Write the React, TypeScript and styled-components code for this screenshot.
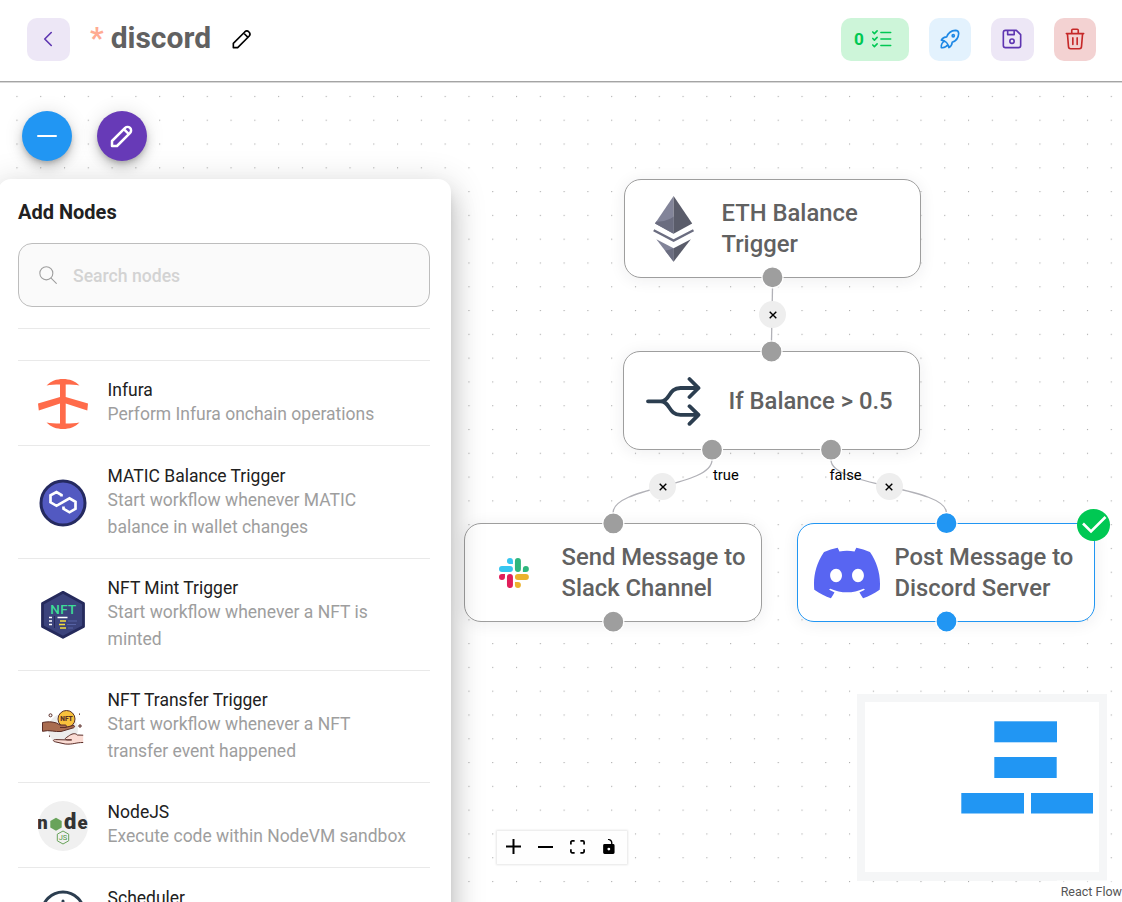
import React from "react";
import styled, { createGlobalStyle } from "styled-components";
import { SiDiscord } from "react-icons/si";

const GlobalStyle = createGlobalStyle`
  * { box-sizing: border-box; }
  body { margin: 0; background: #fff; font-family: Roboto, sans-serif; }
`;

const Page = styled.div`
  display: flex;
  flex-direction: column;
  width: 100%;
  height: 902px;
  overflow: hidden;
`;

const Header = styled.header`
  position: relative;
  z-index: 2;
  display: flex;
  align-items: center;
  height: 82px;
  padding: 0 26px 3px 27px;
  background: #fff;
  border-bottom: 1px solid #a4a4a4;
  box-shadow: 0 1px 0 #d8d8d8;
  flex: none;
`;

const Title = styled.h1`
  display: flex;
  gap: 7px;
  width: 121px;
  margin: 0 18px 3px 20px;
  font-size: 30px;
  line-height: 40px;
  font-weight: 700;
  color: #616161;
`;

const Dirty = styled.span`
  color: #ffab91;
`;

const Actions = styled.div`
  display: flex;
  gap: 20px;
  margin-left: auto;
`;

const ToolButton = styled.button<{ $bg: string; $fg: string; $width?: number }>`
  display: flex;
  align-items: center;
  justify-content: center;
  gap: 5px;
  width: ${(p) => p.$width ?? 42}px;
  height: 43px;
  padding: 0 1px 0 0;
  border: 0;
  border-radius: 10px;
  background: ${(p) => p.$bg};
  color: ${(p) => p.$fg};
  font: 700 17.2px Roboto, sans-serif;
`;

const Canvas = styled.main`
  position: relative;
  flex: 1;
  overflow: hidden;
`;

const Layer = styled.svg`
  position: absolute;
  inset: 0;
  width: 100%;
  height: 100%;
`;

const NodeCard = styled.div<{ $x: number; $y: number; $width: number; $active?: boolean }>`
  position: absolute;
  left: ${(p) => p.$x}px;
  top: ${(p) => p.$y}px;
  display: flex;
  align-items: center;
  gap: 14px;
  width: ${(p) => p.$width}px;
  height: 99px;
  padding-left: 15.5px;
  border: 1px solid ${(p) => (p.$active ? "#2196f3" : "#9e9e9e")};
  border-radius: 17px;
  background: #fff;
  box-shadow: 0 2px 16px rgba(32, 40, 45, 0.08);
`;

const NodeIcon = styled.div`
  display: flex;
  align-items: center;
  justify-content: center;
  width: 67px;
  height: 70px;
  flex: none;
`;

const NodeLabel = styled.div<{ $indent?: number }>`
  padding-top: ${(p) => (p.$indent ? 1 : 0)}px;
  padding-left: ${(p) => p.$indent ?? 0}px;
  font-size: 23.8px;
  line-height: 31px;
  font-weight: 500;
  color: #616161;
  white-space: pre;
`;

const Handle = styled.circle<{ $active?: boolean }>`
  fill: ${(p) => (p.$active ? "#2196f3" : "#9e9e9e")};
  stroke: #fff;
  stroke-width: 1.2px;
`;

const EdgeButton = styled.button<{ $x: number; $y: number }>`
  position: absolute;
  left: ${(p) => p.$x - 13.5}px;
  top: ${(p) => p.$y - 13.5}px;
  display: flex;
  align-items: center;
  justify-content: center;
  width: 27px;
  height: 27px;
  padding: 0;
  border: 0;
  border-radius: 50%;
  background: #eee;
  color: #000;
`;

const EdgeLabel = styled.span<{ $x: number; $y: number }>`
  position: absolute;
  left: ${(p) => p.$x}px;
  top: ${(p) => p.$y}px;
  font-size: 14.7px;
  line-height: 18px;
  color: #000;
`;

const DoneBadge = styled.span`
  position: absolute;
  left: 1077px;
  top: 427px;
  display: flex;
  width: 33px;
  height: 32px;
  border-radius: 50%;
  background: #00c853;
`;

const Fabs = styled.div`
  position: absolute;
  left: 22px;
  top: 29px;
  display: flex;
  gap: 25px;
`;

const Fab = styled.button<{ $bg: string }>`
  display: flex;
  align-items: center;
  justify-content: center;
  width: 50px;
  height: 50px;
  padding: 0;
  border: 0;
  border-radius: 50%;
  background: ${(p) => p.$bg};
  color: #fff;
  box-shadow: 0 3px 5px -1px rgba(0, 0, 0, 0.2), 0 7px 11px rgba(0, 0, 0, 0.14),
    0 1px 20px rgba(0, 0, 0, 0.12);
`;

const Panel = styled.aside`
  position: absolute;
  left: -2px;
  top: 97px;
  width: 453px;
  height: 900px;
  padding: 19px 21px 0 20px;
  border-radius: 13px;
  background: #fff;
  box-shadow: 0 9px 11px -5px rgba(0, 0, 0, 0.2), 0 18px 26px 2px rgba(0, 0, 0, 0.14),
    0 7px 33px 6px rgba(0, 0, 0, 0.12);
`;

const PanelTitle = styled.h2`
  margin: 0;
  font-size: 20px;
  line-height: 28px;
  font-weight: 700;
  color: #212121;
`;

const SearchBox = styled.label`
  display: flex;
  align-items: center;
  gap: 15px;
  height: 64px;
  margin: 17px 0 21px;
  padding-left: 19px;
  border: 1px solid #bdbdbd;
  border-radius: 14px;
  background: #fafafa;
  color: #9e9e9e;
`;

const SearchInput = styled.input`
  flex: 1;
  min-width: 0;
  padding: 2px 0 0;
  border: 0;
  outline: 0;
  background: transparent;
  font: 500 17.6px Roboto, sans-serif;
  &::placeholder {
    color: #d3d3d3;
    opacity: 1;
  }
`;

const List = styled.ul`
  margin: 0;
  padding: 31px 0 0;
  border-top: 1px solid #e9e9e9;
  list-style: none;
`;

const Item = styled.li`
  display: flex;
  align-items: center;
  gap: 19.6px;
  padding: 18.4px 0 17.2px 20px;
  border-top: 1px solid #e9e9e9;
`;

const ItemIcon = styled.div`
  display: flex;
  width: 50px;
  height: 50px;
  flex: none;
  margin: -2px 0;
`;

const ItemName = styled.div`
  font-size: 17.5px;
  line-height: 22px;
  color: #212121;
`;

const ItemText = styled.div`
  min-height: 26.8px;
  font-size: 17.5px;
  line-height: 26.8px;
  color: #9e9e9e;
  white-space: pre;
`;

const Controls = styled.div`
  position: absolute;
  left: 497px;
  top: 749px;
  display: flex;
  width: 130px;
  height: 33px;
  padding: 0 2px 2px 0;
  background: #fefefe;
  box-shadow: 0 0 2px 1px rgba(0, 0, 0, 0.1);
`;

const ControlButton = styled.button`
  display: flex;
  align-items: center;
  justify-content: center;
  flex: 1;
  padding: 0;
  border: 0;
  background: transparent;
`;

const MiniMap = styled.div`
  position: absolute;
  right: 15px;
  top: 612px;
  width: 250px;
  height: 187px;
  border: 8px solid #f5f6f7;
  border-bottom-width: 9px;
  background: #fff;
  svg { display: block; }
`;

const Attribution = styled.div`
  position: absolute;
  right: 0;
  bottom: 0;
  padding: 3px 0 1px 4px;
  background: rgba(255, 255, 255, 0.5);
  font-size: 12.5px;
  line-height: 18px;
  color: #555;
`;

type StrokeProps = { size: number; width?: number; children: React.ReactNode };

const Stroke = ({ size, width = 1.5, children }: StrokeProps) => (
  <svg
    width={size}
    height={size}
    viewBox="0 0 24 24"
    fill="none"
    stroke="currentColor"
    strokeWidth={width}
    strokeLinecap="round"
    strokeLinejoin="round"
  >
    {children}
  </svg>
);

const Pencil = ({ size, width }: { size: number; width?: number }) => (
  <Stroke size={size} width={width}>
    <path d="M4 20h4L18.500 9.500a2.830 2.830 0 0 0-4-4L4 16v4M13.500 6.500l4 4" />
  </Stroke>
);

const Cross = () => (
  <svg width="8" height="8" viewBox="0 0 8 8" stroke="#000" strokeWidth="1.400">
    <path d="M.7.7l6.600 6.600M7.300.7L.7 7.300" />
  </svg>
);

const EthIcon = () => (
  <svg width="42" height="66" viewBox="0 0 42 66">
    <path d="M20.600 0L2 27.500l18.600 10.300z" fill="#828499" />
    <path d="M20.600 0l18.600 27.500-18.600 10.300z" fill="#5a5c6a" />
    <path d="M2 27.500l1.200-1.900c6 .3 13-1.500 17.400-5.100v17.300z" fill="#6b6d80" />
    <path d="M.7 34.300l19.900 10.300 19.900-10.300" fill="none" stroke="#6b6d80" strokeWidth="2.300" />
    <path d="M3.300 43.200l17.300 9V65.700z" fill="#828499" />
    <path d="M12 54.500c3-.3 6-1 8.600-2.300v13.500z" fill="#6b6d80" />
    <path d="M37.900 43.200l-17.300 9v13.500z" fill="#5a5c6a" />
  </svg>
);

const BranchIcon = () => (
  <svg
    width="56"
    height="50"
    viewBox="0 0 56 50"
    fill="none"
    stroke="#2c3e50"
    strokeWidth="3.800"
    strokeLinecap="round"
    strokeLinejoin="round"
  >
    <path d="M3 25.300h12.500c10 0 7.500-13.300 20-13.300h18M15.500 25.300c10 0 7.500 13.500 20 13.500h18M44.500 3l9 9-9 9M44.500 30.200l9 8.600-9 9" />
  </svg>
);

const SlackIcon = () => (
  <svg width="30" height="30" viewBox="0 0 54 54">
    <path fill="#36C5F0" d="M19.712.133a5.381 5.381 0 0 0-5.376 5.387 5.381 5.381 0 0 0 5.376 5.386h5.376V5.520A5.381 5.381 0 0 0 19.712.133m0 14.365H5.376A5.381 5.381 0 0 0 0 19.884a5.381 5.381 0 0 0 5.376 5.387h14.336a5.381 5.381 0 0 0 5.376-5.387 5.381 5.381 0 0 0-5.376-5.386" />
    <path fill="#2EB67D" d="M53.760 19.884a5.381 5.381 0 0 0-5.376-5.386 5.381 5.381 0 0 0-5.376 5.386v5.387h5.376a5.381 5.381 0 0 0 5.376-5.387m-14.336 0V5.520A5.381 5.381 0 0 0 34.048.133a5.381 5.381 0 0 0-5.376 5.387v14.364a5.381 5.381 0 0 0 5.376 5.387 5.381 5.381 0 0 0 5.376-5.387" />
    <path fill="#ECB22E" d="M34.048 54a5.381 5.381 0 0 0 5.376-5.387 5.381 5.381 0 0 0-5.376-5.386h-5.376v5.386A5.381 5.381 0 0 0 34.048 54m0-14.365h14.336a5.381 5.381 0 0 0 5.376-5.386 5.381 5.381 0 0 0-5.376-5.387H34.048a5.381 5.381 0 0 0-5.376 5.387 5.381 5.381 0 0 0 5.376 5.386" />
    <path fill="#E01E5A" d="M0 34.249a5.381 5.381 0 0 0 5.376 5.386 5.381 5.381 0 0 0 5.376-5.386v-5.387H5.376A5.381 5.381 0 0 0 0 34.249m14.336-.001v14.364A5.381 5.381 0 0 0 19.712 54a5.381 5.381 0 0 0 5.376-5.387V34.250a5.381 5.381 0 0 0-5.376-5.387 5.381 5.381 0 0 0-5.376 5.387" />
  </svg>
);

const InfuraIcon = () => (
  <svg width="50" height="50" viewBox="0 0 50 50" fill="#ff6b4a">
    <path d="M8.500 6.500C13 2 18.500 0 25 0s12 2 16.500 6.500C37.500 5.800 33 5.500 27.700 5.500V18L50 24.500L49.300 31.500L27.700 24.500V44.500c5.300 0 9.800-.3 13.800-1C37 48 31.500 50 25 50S13 48 8.500 43.500c4 .7 8.500 1 13.500 1V24.500L.8 31.500 0 24.500 22 18V5.500c-5 0-9.500.3-13.500 1z" />
  </svg>
);

const MaticIcon = () => (
  <svg width="50" height="50" viewBox="0 0 50 50">
    <circle cx="25" cy="25" r="22" fill="#5259c1" stroke="#252a60" strokeWidth="3" />
    <path
      d="M23.500 18.500v-1.500l-5-3-6 3.300v7l6 3.500 13-7.500 6 3.500v7l-6 3.500-6-3.500v-2.300"
      fill="none"
      stroke="#fff"
      strokeWidth="2.700"
    />
  </svg>
);

const NftMintIcon = () => (
  <svg width="50" height="50" viewBox="0 0 50 50">
    <path d="M25 2.300L45.500 13.500v23L25 47.300 4.500 36.500v-23z" fill="#3b437c" stroke="#252a5c" strokeWidth="2.800" strokeLinejoin="round" />
    <text x="12.300" y="24.300" textLength="26" fontFamily="Roboto" fontWeight="500" fontSize="13.500" fill="#3ddc97">NFT</text>
    <path d="M16.500 26v12" stroke="#252a5c" strokeWidth="1" />
    <path d="M11 27.500h3M11 31h3M11 34.500h3M19.500 27.500h10" stroke="#fff" strokeWidth="1.500" />
    <path d="M22 31h6M21 34.500h6M22 38h6" stroke="#f5dd3d" strokeWidth="1.500" />
    <path d="M30 31h9M29 34.500h9M30 38h5" stroke="#5662a4" strokeWidth="1.200" />
  </svg>
);

const NftTransferIcon = () => (
  <svg width="50" height="50" viewBox="0 0 50 50">
    <circle cx="25" cy="27" r="15" fill="#ececec" />
    <circle cx="28.500" cy="17" r="8.500" fill="#f8c13c" stroke="#5a3026" strokeWidth="1" />
    <text x="28.500" y="19.300" textAnchor="middle" textLength="12.500" fontFamily="Roboto" fontWeight="900" fontSize="6.600" fill="#5a3026">NFT</text>
    <path d="M4.500 20.500c5-1 9-1 14 .5l3.500 2h5c2 0 2 2.500 0 2.500h-5 5l8-2c2-.3 2 1.700.5 2.300L23 29.500c-6 .7-11-2-18.500-.2z" fill="#a96c50" stroke="#5a2d27" strokeWidth="1" strokeLinejoin="round" />
    <path d="M45.200 33.200l-6-.2c-2-2.500-6-1-8.500 1l-2.500 1.700c-2 1 0 2.500 1.500 2.200h4-5l-11-.3c-3 0-3 1.700-.5 2.200l10 2.200c8 .7 10-1.500 18-1.500" fill="#fbdcd4" stroke="#5a2d27" strokeWidth="1" strokeLinejoin="round" />
    <circle cx="12.500" cy="13.300" r="1.500" fill="none" stroke="#5a2d27" />
    <path d="M42 22v4M40 24h4M41.500 11.500v1.300M11.500 33.500v1.300" stroke="#5a2d27" />
  </svg>
);

const NodeJsIcon = () => (
  <svg width="50" height="50" viewBox="0 0 50 50">
    <circle cx="25" cy="25" r="25" fill="#f0f0f0" />
    <g fontFamily="Roboto" fontWeight="900" fontSize="18.500" fill="#333">
      <text x="-.7" y="28">n</text>
      <text x="26" y="28" fontSize="22">d</text>
      <text x="39.500" y="28">e</text>
    </g>
    <path d="M18 16.700l5.700 3.300v6.500L18 29.800l-5.700-3.300V20z" fill="#68a35a" />
    <path d="M25 30l5.700 3.200v6.600L25 43l-5.700-3.200v-6.600z" fill="none" stroke="#68a35a" strokeWidth="1" />
    <text x="25" y="39.300" textAnchor="middle" fontFamily="Roboto" fontSize="7.500" fill="#539943">JS</text>
  </svg>
);

const SchedulerIcon = () => (
  <svg width="50" height="50" viewBox="0 0 50 50" fill="none" stroke="#2c3e50" strokeWidth="3" strokeLinecap="round">
    <circle cx="25" cy="27" r="21" />
    <path d="M25 15v12l8 7" />
  </svg>
);

const catalogue = [
  { name: "Infura", text: "Perform Infura onchain operations", icon: <InfuraIcon /> },
  { name: "MATIC Balance Trigger", text: "Start workflow whenever MATIC\nbalance in wallet changes", icon: <MaticIcon /> },
  { name: "NFT Mint Trigger", text: "Start workflow whenever a NFT is\nminted", icon: <NftMintIcon /> },
  { name: "NFT Transfer Trigger", text: "Start workflow whenever a NFT\ntransfer event happened", icon: <NftTransferIcon /> },
  { name: "NodeJS", text: "Execute code within NodeVM sandbox", icon: <NodeJsIcon /> },
  { name: "Scheduler", text: "", icon: <SchedulerIcon /> },
];

const nodes = [
  { x: 624, y: 97, width: 297, label: "ETH Balance\nTrigger", icon: <EthIcon /> },
  { x: 623, y: 269, width: 297, label: "If Balance > 0.5", icon: <BranchIcon />, indent: 8 },
  { x: 464, y: 441, width: 298, label: "Send Message to\nSlack Channel", icon: <SlackIcon /> },
  { x: 797, y: 441, width: 298, label: "Post Message to\nDiscord Server", icon: <SiDiscord size={66} color="#5865f2" />, active: true },
];

const handles = [
  { x: 772.5, y: 195.3 },
  { x: 771.5, y: 269.5 },
  { x: 712, y: 367.7 },
  { x: 831, y: 367.7 },
  { x: 613.3, y: 441.4 },
  { x: 613.3, y: 539.7 },
  { x: 946.5, y: 441.2, active: true },
  { x: 946.5, y: 539.5, active: true },
];

const edges = [
  { d: "M772.500 206L771.500 259", x: 772.5, y: 232.5 },
  { d: "M712 378C712 404.500 613 404.500 613 431", x: 662.7, y: 404.6 },
  { d: "M831 378C831 404.500 946.500 404.500 946.500 431", x: 889, y: 404.6 },
];

export default function App() {
  return (
    <Page>
      <GlobalStyle />
      <Header>
        <ToolButton $bg="#ede7f6" $fg="#5e35b1" $width={43}>
          <Stroke size={26}><path d="M15 6l-6 6 6 6" /></Stroke>
        </ToolButton>
        <Title><Dirty>*</Dirty>discord</Title>
        <Pencil size={26} />
        <Actions>
          <ToolButton $bg="#cdf5d9" $fg="#00c853" $width={68}>
            0
            <Stroke size={26}>
              <path d="M3.500 5.500L5 7l2.500-2.500M3.500 11.500L5 13l2.500-2.500M3.500 17.500L5 19l2.500-2.500M11 6h9M11 12h9M11 18h9" />
            </Stroke>
          </ToolButton>
          <ToolButton $bg="#e3f2fd" $fg="#1e88e5">
            <Stroke size={26}>
              <path d="M4 13a8 8 0 0 1 7 7 6 6 0 0 0 3-5 9 9 0 0 0 6-8 3 3 0 0 0-3-3 9 9 0 0 0-8 6 6 6 0 0 0-5 3M7 14a6 6 0 0 0-3 6 6 6 0 0 0 6-3" />
              <circle cx="15" cy="9" r="1" />
            </Stroke>
          </ToolButton>
          <ToolButton $bg="#ede7f6" $fg="#5e35b1" $width={43}>
            <Stroke size={26}>
              <path d="M6 4h10l4 4v10a2 2 0 0 1-2 2H6a2 2 0 0 1-2-2V6a2 2 0 0 1 2-2M14 4v4H8V4" />
              <circle cx="12" cy="14" r="2" />
            </Stroke>
          </ToolButton>
          <ToolButton $bg="#f3d2d2" $fg="#c62828">
            <Stroke size={26}>
              <path d="M4 7h16M10 11v6M14 11v6M5 7l1 12a2 2 0 0 0 2 2h8a2 2 0 0 0 2-2l1-12M9 7V4a1 1 0 0 1 1-1h4a1 1 0 0 1 1 1v3" />
            </Stroke>
          </ToolButton>
        </Actions>
      </Header>

      <Canvas>
        <Layer>
          <defs>
            <pattern id="dots" x="16.400" y="13.900" width="23.790" height="23.790" patternUnits="userSpaceOnUse">
              <circle cx=".6" cy=".6" r=".6" fill="#999" />
            </pattern>
          </defs>
          <rect width="100%" height="100%" fill="url(#dots)" />
        </Layer>
        {nodes.map((n) => (
          <NodeCard key={n.label} $x={n.x} $y={n.y} $width={n.width} $active={n.active}>
            <NodeIcon>{n.icon}</NodeIcon>
            <NodeLabel $indent={n.indent}>{n.label}</NodeLabel>
          </NodeCard>
        ))}
        <Layer>
          {edges.map((e) => (
            <path key={e.d} d={e.d} fill="none" stroke="#b1b1b7" strokeWidth="1.300" />
          ))}
          {handles.map((h) => (
            <Handle key={`${h.x}-${h.y}`} cx={h.x} cy={h.y} r={10.5} $active={h.active} />
          ))}
        </Layer>
        {edges.map((e) => (
          <EdgeButton key={e.x} $x={e.x} $y={e.y}><Cross /></EdgeButton>
        ))}
        <EdgeLabel $x={713} $y={384}>true</EdgeLabel>
        <EdgeLabel $x={829.5} $y={384}>false</EdgeLabel>
        <DoneBadge>
          <svg width="33" height="32" viewBox="0 0 33 32" fill="none" stroke="#fff" strokeWidth="2.600">
            <path d="M6 14.500l8 8L28.500 8" />
          </svg>
        </DoneBadge>

        <Controls>
          <ControlButton><svg width="15" height="15" viewBox="0 0 32 32"><path d="M32 18.133H18.133V32h-4.266V18.133H0v-4.266h13.867V0h4.266v13.867H32z" /></svg></ControlButton>
          <ControlButton><svg width="15" height="2" viewBox="0 0 32 4.200"><path d="M0 0h32v4.200H0z" /></svg></ControlButton>
          <ControlButton><svg width="15" height="14" viewBox="0 0 32 30"><path d="M3.692 4.630c0-.53.4-.938.939-.938h5.215V0H4.708C2.130 0 0 2.054 0 4.630v5.216h3.692V4.631zM27.354 0h-5.200v3.692h5.170c.53 0 .984.4.984.939v5.215H32V4.631A4.624 4.624 0 0027.354 0zm.954 24.830c0 .532-.4.940-.939.940h-5.215v3.768h5.215c2.577 0 4.631-2.130 4.631-4.707v-5.139h-3.692v5.139zm-23.677.940c-.531 0-.939-.4-.939-.940v-5.138H0v5.139c0 2.577 2.130 4.707 4.708 4.707h5.138V25.770H4.631z" /></svg></ControlButton>
          <ControlButton><svg width="12" height="15" viewBox="0 0 25 32"><path d="M21.333 10.667H19.810V7.619C19.810 3.429 16.380 0 12.190 0c-4.114 1.828-1.370 2.133.305 2.438 1.676.305 4.420 2.590 4.420 5.181v3.048H3.047A3.056 3.056 0 000 13.714v15.238A3.056 3.056 0 003.048 32h18.285a3.056 3.056 0 003.048-3.048V13.714a3.056 3.056 0 00-3.048-3.047zM12.190 24.533a3.056 3.056 0 01-3.047-3.047 3.056 3.056 0 013.047-3.048 3.056 3.056 0 013.048 3.048 3.056 3.056 0 01-3.048 3.047z" /></svg></ControlButton>
        </Controls>

        <MiniMap>
          <svg width="234" height="170" fill="#2196f3">
            <rect x="129.300" y="19.300" width="62.700" height="21" />
            <rect x="129.300" y="55" width="62.400" height="21" />
            <rect x="96.300" y="91" width="62.700" height="20.500" />
            <rect x="166" y="91" width="62" height="20.500" />
          </svg>
        </MiniMap>
        <Attribution>React Flow</Attribution>

        <Panel>
          <PanelTitle>Add Nodes</PanelTitle>
          <SearchBox>
            <Stroke size={20} width={1.3}>
              <circle cx="10" cy="10" r="7.800" />
              <path d="M15.700 15.700L22 22" />
            </Stroke>
            <SearchInput placeholder="Search nodes" />
          </SearchBox>
          <List>
            {catalogue.map((c) => (
              <Item key={c.name}>
                <ItemIcon>{c.icon}</ItemIcon>
                <div>
                  <ItemName>{c.name}</ItemName>
                  <ItemText>{c.text}</ItemText>
                </div>
              </Item>
            ))}
          </List>
        </Panel>
        <Fabs>
          <Fab $bg="#2196f3">
            <svg width="20" height="2" viewBox="0 0 20 2"><rect width="20" height="2" rx="1" fill="#fff" /></svg>
          </Fab>
          <Fab $bg="#673ab7"><Pencil size={30} width={2} /></Fab>
        </Fabs>
      </Canvas>
    </Page>
  );
}
